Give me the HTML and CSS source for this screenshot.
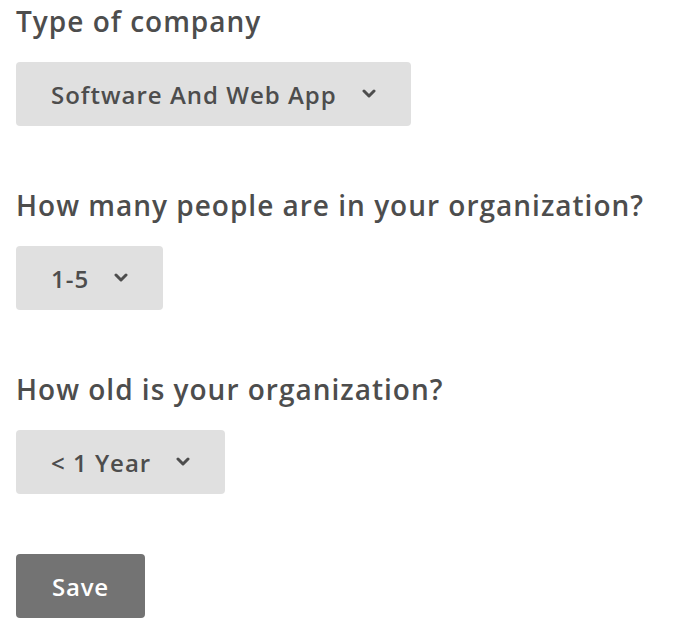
FILE: index.html
```html
<!DOCTYPE html>
<html>
<head>
<meta charset="utf-8">
<link rel="stylesheet" href="styles.css">
</head>
<body>
<form class="form">
  <div class="field">
    <label class="label">Type of company</label>
    <button type="button" class="select"><span>Software And Web App</span><svg class="chev" viewBox="0 0 14 10" width="14" height="10"><path d="M2 2 L7 7 L12 2" fill="none" stroke="currentColor" stroke-width="3" stroke-linecap="round" stroke-linejoin="round"/></svg></button>
  </div>
  <div class="field">
    <label class="label">How many people are in your organization?</label>
    <button type="button" class="select"><span>1-5</span><svg class="chev" viewBox="0 0 14 10" width="14" height="10"><path d="M2 2 L7 7 L12 2" fill="none" stroke="currentColor" stroke-width="3" stroke-linecap="round" stroke-linejoin="round"/></svg></button>
  </div>
  <div class="field">
    <label class="label">How old is your organization?</label>
    <button type="button" class="select"><span>&lt; 1 Year</span><svg class="chev" viewBox="0 0 14 10" width="14" height="10"><path d="M2 2 L7 7 L12 2" fill="none" stroke="currentColor" stroke-width="3" stroke-linecap="round" stroke-linejoin="round"/></svg></button>
  </div>
  <button type="button" class="save">Save</button>
</form>
</body>
</html>
```
FILE: styles.css
```css
html, body {
  margin: 0;
  padding: 0;
  background: #ffffff;
}
body {
  font-family: "Open Sans", "Liberation Sans", sans-serif;
  color: #4d4d4d;
}
.form {
  display: flex;
  flex-direction: column;
  align-items: flex-start;
  padding: 0 16px;
}
.field {
  display: flex;
  flex-direction: column;
  align-items: flex-start;
  gap: 20px;
  margin-bottom: 58px;
}
.label {
  font-size: 28px;
  line-height: 42px;
  font-weight: 600;
  letter-spacing: 1px;
}
.select {
  display: flex;
  align-items: center;
  gap: 25px;
  height: 64px;
  padding: 0 35px 0 35px;
  border: none;
  border-radius: 4px;
  background: #e0e0e0;
  color: #4d4d4d;
  font-family: inherit;
  font-size: 24px;
  font-weight: 600;
  letter-spacing: 1px;
}
.chev {
  display: block;
}
.save {
  margin-top: 2px;
  height: 64px;
  padding: 0 36px;
  border: none;
  border-radius: 4px;
  background: #737373;
  color: #ffffff;
  font-family: inherit;
  font-size: 24px;
  font-weight: 600;
  letter-spacing: 0.8px;
}
```
